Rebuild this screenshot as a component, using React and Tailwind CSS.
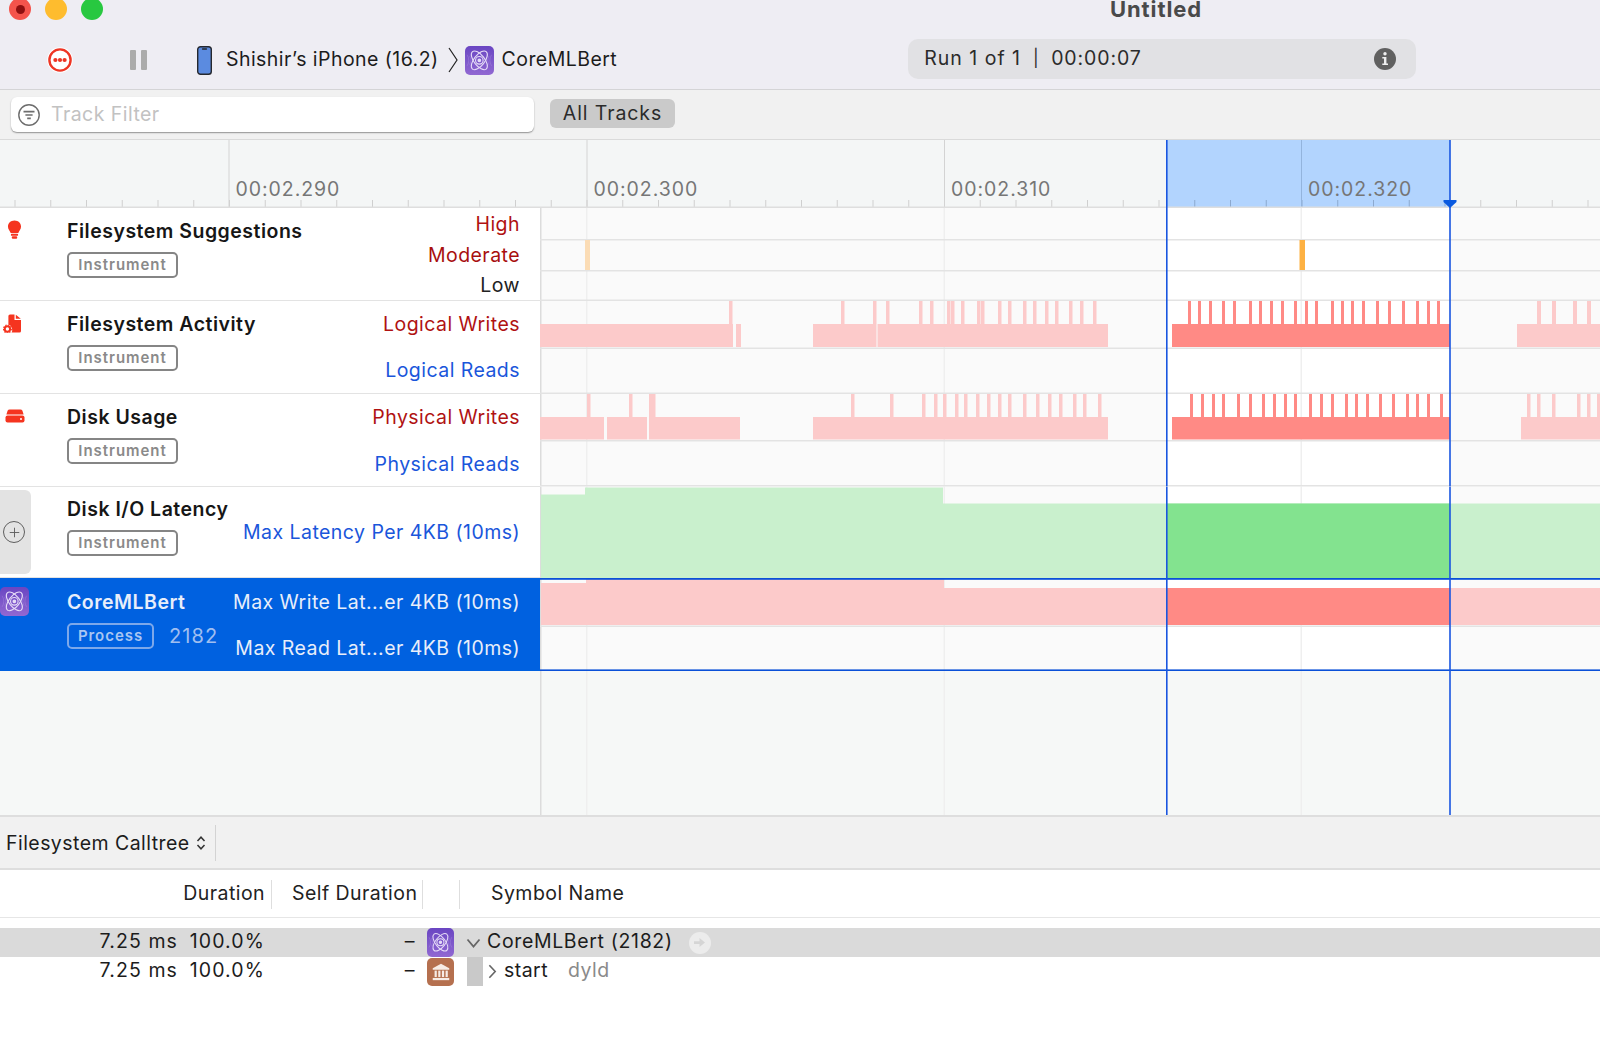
import React from 'react';
import { Plus } from 'lucide-react';

const majors = [228.5, 586.5, 944, 1301];
const labels = ['00:02.290', '00:02.300', '00:02.310', '00:02.320'];
const SEL_L = 1167;
const SEL_R = 1450;

const FADE = '#fccaca';
const HOT = '#ff8a85';

const minorTicks = [];
for (let i = -6; i < 40; i++) minorTicks.push(229 + i * 35.75);

const spikes = {
  activityFaded: [729, 841, 873, 886, 919, 930, 947, 951, 961, 977, 981, 998, 1008, 1023, 1033, 1045, 1055, 1069, 1080, 1093],
  activityHot: [1188, 1198, 1209, 1222, 1233, 1249, 1259, 1270, 1281, 1294, 1305, 1315, 1331, 1341, 1351, 1362, 1376, 1388, 1402, 1416, 1427, 1437],
  activityRight: [1537, 1552, 1573, 1587],
  diskFaded: [587, 629, 649, 652, 851, 890, 922, 934, 943, 955, 964, 976, 987, 998, 1008, 1023, 1036, 1048, 1059, 1073, 1083, 1098],
  diskHot: [1190, 1201, 1212, 1222, 1237, 1249, 1262, 1273, 1284, 1294, 1309, 1320, 1331, 1345, 1355, 1366, 1379, 1392, 1406, 1416, 1427, 1440],
  diskRight: [1527, 1537, 1552, 1577, 1587, 1597],
};

const Rect = ({ x1, x2, y1, y2, fill }) => <rect x={x1} y={y1} width={x2 - x1} height={y2 - y1} fill={fill} />;

// timeline lane drawing, coordinates are page coordinates
const Lane = ({ top, h, bg = '#fafafa', lines = [], selBg = '#ffffff', children, border = '#e3e3e3' }) => (
  <svg width="1060" height={h} viewBox={`540 ${top} 1060 ${h}`} className="block shrink-0">
    <Rect x1={540} x2={1600} y1={top} y2={top + h} fill={bg} />
    <Rect x1={SEL_L} x2={SEL_R} y1={top} y2={top + h} fill={selBg} />
    {majors.slice(1).map((x) => (
      <rect key={x} x={x - 0.5} y={top} width="1.5" height={h} fill="#efefef" />
    ))}
    <rect x="540" y={top} width="1.5" height={h} fill="#dcdcdc" />
    {lines.map((y) => (
      <rect key={y} x="540" y={y} width="1060" height="1.5" fill={border} />
    ))}
    {children}
    <rect x={SEL_L - 1} y={top} width="1.6" height={h} fill="#1a56e0" />
    <rect x={SEL_R - 0.8} y={top} width="1.6" height={h} fill="#1a56e0" />
  </svg>
);

const AtomIcon = ({ className }) => (
  <div className={`flex items-center justify-center bg-linear-to-b from-[#6a45c2] to-[#9168d2] rounded-[5px] ${className}`}>
    <svg viewBox="0 0 24 24" className="w-[92%] h-[92%]" fill="none" stroke="#e6dcf7" strokeWidth="1">
      <g opacity="0.22" strokeWidth="0.7">
        <path d="M1 7 Q4 12 1 17 M3.4 8 Q5.6 12 3.4 16 M23 7 Q20 12 23 17 M20.6 8 Q18.4 12 20.6 16" />
      </g>
      <ellipse cx="12" cy="12" rx="4.8" ry="10" transform="rotate(38 12 12)" />
      <ellipse cx="12" cy="12" rx="4.8" ry="10" transform="rotate(-38 12 12)" />
      <circle cx="12" cy="12" r="3.4" />
      <circle cx="12" cy="12" r="1.2" fill="#e6dcf7" />
    </svg>
  </div>
);

const BankIcon = () => (
  <div className="flex items-center justify-center w-[27px] h-[28px] rounded-[5px] bg-[#b5704f]">
    <svg viewBox="0 0 24 24" className="w-[22px] h-[22px]" fill="#f7ece6">
      <path d="M12 3 L21 8 V9.5 H3 V8 Z" />
      <rect x="5" y="10.5" width="2.4" height="7" />
      <rect x="9" y="10.5" width="2.4" height="7" />
      <rect x="13" y="10.5" width="2.4" height="7" />
      <rect x="17" y="10.5" width="2.4" height="7" />
      <rect x="3" y="18.5" width="18" height="2.4" />
    </svg>
  </div>
);

const BulbIcon = () => (
  <svg viewBox="0 0 16 22" className="w-[15px] h-[20px]">
    <path d="M8 0.5 C3.6 0.5 0.8 3.6 0.8 7.2 C0.8 10.4 3 11.8 3.8 14.4 H12.2 C13 11.8 15.2 10.4 15.2 7.2 C15.2 3.6 12.4 0.5 8 0.5 Z" fill="#f5341f" />
    <rect x="4" y="15.2" width="8" height="2.2" rx="1" fill="#f5341f" />
    <rect x="5" y="18" width="6" height="2.6" rx="1.2" fill="#f5341f" />
  </svg>
);

const FileGearIcon = () => (
  <svg viewBox="0 0 19 19" className="w-[19px] h-[19px]">
    <path d="M7 0.5 H11.5 V6 H18 V17 Q18 18.5 16.5 18.5 H8.6 Q9.6 16.6 9 14.2 Q8 11.4 5.4 10.6 V2 Q5.4 0.5 7 0.5 Z" fill="#f5341f" />
    <path d="M12.8 0.8 L17.8 4.8 H12.8 Z" fill="#f5341f" />
    <circle cx="4.4" cy="15" r="2.7" fill="none" stroke="#f5341f" strokeWidth="2" />
    <circle cx="4.4" cy="15" r="4" fill="none" stroke="#f5341f" strokeWidth="1.1" strokeDasharray="1.4 1.3" />
  </svg>
);

const DiskIcon = () => (
  <svg viewBox="0 0 20 14" className="w-[20px] h-[14px]">
    <path d="M4.6 0.5 H15.4 Q16.8 0.5 17.4 1.8 L18.6 5.4 H1.4 L2.6 1.8 Q3.2 0.5 4.6 0.5 Z" fill="#f5341f" />
    <rect x="0.5" y="6.6" width="19" height="6.9" rx="2" fill="#f5341f" />
    <circle cx="16" cy="10" r="1" fill="#fff" />
  </svg>
);

const PhoneIcon = () => (
  <svg viewBox="0 0 15 29" className="w-[15px] h-[29px]">
    <rect x="0.7" y="0.7" width="13.6" height="27.6" rx="2.8" fill="#5b8be0" stroke="#25282e" strokeWidth="1.4" />
    <rect x="4.9" y="2.2" width="5.2" height="1.5" rx="0.7" fill="#25282e" />
  </svg>
);

const RecordIcon = () => (
  <svg viewBox="0 0 26 26" className="w-[26px] h-[26px]">
    <circle cx="13" cy="13" r="12.8" fill="#fff" />
    <circle cx="13" cy="13" r="10.6" fill="none" stroke="#ee3524" strokeWidth="2.4" />
    <circle cx="8.4" cy="13" r="2.1" fill="#ee3524" />
    <circle cx="13" cy="13" r="2.1" fill="#ee3524" />
    <circle cx="17.6" cy="13" r="2.1" fill="#ee3524" />
  </svg>
);

const InfoIcon = () => (
  <svg viewBox="0 0 22 22" className="w-[22px] h-[22px]">
    <circle cx="11" cy="11" r="11" fill="#606060" />
    <circle cx="11" cy="5.8" r="1.7" fill="#eee" />
    <path d="M8.3 9 H12.4 V15.4 H14 V17 H8.3 V15.4 H10 V10.6 H8.3 Z" fill="#eee" />
  </svg>
);

const FilterIcon = () => (
  <svg viewBox="0 0 22 22" className="w-[22px] h-[22px]" fill="none" stroke="#6d6d6d">
    <circle cx="11" cy="11" r="10.2" strokeWidth="1.4" />
    <path d="M5.5 7.6 H16.5 M7.4 11 H14.6 M9.2 14.4 H12.8" strokeWidth="1.6" />
  </svg>
);

const Badge = ({ children, active }) => (
  <div
    className={`h-[26px] flex items-center justify-center border-[2px] rounded-[5px] text-[15px] font-semibold tracking-[0.95px] ${
      active ? 'w-[87px] border-[#7da8ea] text-[#a9c6f2]' : 'w-[111px] border-[#858585] text-[#8a8a8a] bg-white'
    }`}
  >
    {children}
  </div>
);

const TrackInfo = ({ title, kind = 'Instrument', active, pid, icon, labels, titleTop, badgeGap = 'mt-[9px]' }) => (
  <div className={`relative w-[540px] shrink-0 h-full ${active ? 'bg-[#0061e0]' : 'bg-white border-b-[1.5px] border-[#e3e3e3]'}`}>
    {icon}
    <div className={`pl-[67px] ${titleTop}`}>
      <div className={`text-[19.5px] leading-[24px] font-semibold tracking-[0.5px] ${active ? 'text-[#e8eefa]' : 'text-[#161616]'}`}>{title}</div>
      <div className={`${badgeGap} flex items-center gap-[15px]`}>
        <Badge active={active}>{kind}</Badge>
        {pid && <span className="text-[20px] tracking-[1.1px] text-[#a0bff0]">{pid}</span>}
      </div>
    </div>
    {labels}
  </div>
);

const TrackLabel = ({ color, children }) => <div className={`text-[19.5px] leading-[24px] whitespace-nowrap ${color}`}>{children}</div>;

const LabelColumn = ({ className, children }) => (
  <div className={`absolute top-0 right-[20px] flex flex-col items-end ${className}`}>{children}</div>
);

const IconSlot = ({ className, children }) => <div className={`absolute ${className}`}>{children}</div>;

const App = () => {
  return (
    <div className="w-[1600px] h-[1048px] overflow-hidden flex flex-col bg-white text-[#1c1c1c] tracking-[0.45px] font-['Inter','Liberation_Sans',sans-serif]">
      {/* title bar + toolbar */}
      <div className="h-[90px] shrink-0 bg-[#eeedf3] border-b-[1.5px] border-[#d4d4d6] relative">
        <div className="flex gap-[14px] pl-[9px] -mt-[2px]">
          <div className="w-[22px] h-[22px] rounded-full bg-[#f4544c] flex items-center justify-center">
            <div className="w-[9px] h-[9px] rounded-full bg-[#8e1010]" />
          </div>
          <div className="w-[22px] h-[22px] rounded-full bg-[#febc2e]" />
          <div className="w-[22px] h-[22px] rounded-full bg-[#28c840]" />
        </div>
        <div className="absolute top-[-7px] left-[1110px] text-[22px] font-bold tracking-[0.9px] text-[#4a4a4a]">Untitled</div>
        <div className="flex items-center mt-[20px] h-[40px]">
          <div className="ml-[47px]"><RecordIcon /></div>
          <div className="ml-[57px] flex gap-[5px]">
            <div className="w-[6px] h-[20px] bg-[#ababab] rounded-[1px]" />
            <div className="w-[6px] h-[20px] bg-[#ababab] rounded-[1px]" />
          </div>
          <div className="ml-[50px]"><PhoneIcon /></div>
          <div className="ml-[14px] text-[19.5px] whitespace-nowrap">Shishir’s iPhone (16.2)</div>
          <svg viewBox="0 0 10 26" className="ml-[9px] w-[10px] h-[26px]" fill="none" stroke="#222" strokeWidth="1.2">
            <path d="M1 1 L9 13 L1 25" />
          </svg>
          <AtomIcon className="ml-[7px] w-[29px] h-[29px]" />
          <div className="ml-[8px] text-[19.5px]">CoreMLBert</div>
          <div className="ml-[291px] -mt-[2px] w-[508px] h-[40px] bg-[#e1e1e4] rounded-[10px] flex items-center justify-between pl-[16px] pr-[20px] text-[19.5px] text-[#2b2b2b]">
            <div className="flex items-center">
              <span className="tracking-[1px]">Run 1 of 1</span>
              <span className="mx-[12px] text-[17px]">|</span>
              <span className="tracking-[0.9px]">00:00:07</span>
            </div>
            <InfoIcon />
          </div>
        </div>
      </div>

      {/* filter bar */}
      <div className="h-[50px] shrink-0 bg-[#f1f1f1] border-b-[1.5px] border-[#dadada] flex items-center pl-[11px]">
        <div className="w-[523px] h-[35px] bg-white rounded-[6px] shadow-[0_1px_1.5px_rgba(0,0,0,0.4)] flex items-center pl-[7px] gap-[11px]">
          <FilterIcon />
          <span className="text-[19.5px] text-[#c2c2c2] pt-[1px]">Track Filter</span>
        </div>
        <div className="ml-[16px] w-[125px] h-[29px] bg-[#cacaca] rounded-[6px] flex items-center justify-center text-[19.5px] tracking-[0.9px] text-[#2b2b2b] -mt-[2px]">All Tracks</div>
      </div>

      {/* ruler */}
      <svg width="1600" height="68" viewBox="0 140 1600 68" className="block shrink-0 font-['Inter',sans-serif]">
        <rect x="0" y="140" width="1600" height="68" fill="#f4f6f6" />
        <rect x={SEL_L} y="140" width={SEL_R - SEL_L} height="68" fill="#b2d4fe" />
        {minorTicks.map((x) => {
          const inSel = x > SEL_L && x < SEL_R;
          return <rect key={x} x={x} y="200" width="1" height="7" fill={inSel ? '#8ca9cf' : '#cfcfcf'} />;
        })}
        {majors.map((x, i) => (
          <React.Fragment key={x}>
            <rect x={x} y="140" width="1" height="67" fill={i === 3 ? '#93b4dd' : '#d3d3d3'} />
            <text x={x + 7} y="196" fontSize="19.5" letterSpacing="0.95" fill="#767676">{labels[i]}</text>
          </React.Fragment>
        ))}
        <rect x="0" y="206.5" width="1600" height="1.5" fill="#dedede" />
        <rect x={SEL_L - 1} y="140" width="1.6" height="68" fill="#1a56e0" />
        <rect x={SEL_R - 0.8} y="140" width="1.6" height="68" fill="#1a56e0" />
        <path d="M1443.5 200 H1456.5 V202 L1450 208 L1443.5 202 Z" fill="#0a5ae0" />
      </svg>

      {/* tracks */}
      <div className="flex shrink-0 h-[93px]">
        <TrackInfo
          title="Filesystem Suggestions"
          titleTop="pt-[11px]"
          icon={<IconSlot className="left-[7px] top-[12px]"><BulbIcon /></IconSlot>}
          labels={
            <LabelColumn className="pt-[4px] gap-[6.5px]">
              <TrackLabel color="text-[#b01212]">High</TrackLabel>
              <TrackLabel color="text-[#a80f0f]">Moderate</TrackLabel>
              <TrackLabel color="text-[#222222]">Low</TrackLabel>
            </LabelColumn>
          }
        />
        <Lane top={208} h={93} lines={[239, 270, 299.5]}>
          <Rect x1={585} x2={590} y1={240} y2={270} fill="#fbdcb5" />
          <Rect x1={1299.5} x2={1305} y1={240} y2={270} fill="#fdb143" />
        </Lane>
      </div>
      <div className="flex shrink-0 h-[93px]">
        <TrackInfo
          title="Filesystem Activity"
          titleTop="pt-[11px]"
          icon={<IconSlot className="left-[3px] top-[13px]"><FileGearIcon /></IconSlot>}
          labels={
            <LabelColumn className="pt-[11px] gap-[22px]">
              <TrackLabel color="text-[#b01212]">Logical Writes</TrackLabel>
              <TrackLabel color="text-[#1a56db]">Logical Reads</TrackLabel>
            </LabelColumn>
          }
        />
        <Lane top={301} h={93} lines={[347.5, 392.5]}>
          <Rect x1={540} x2={733} y1={324} y2={347} fill={FADE} />
          <Rect x1={736} x2={741} y1={324} y2={347} fill={FADE} />
          <Rect x1={813} x2={876.5} y1={324} y2={347} fill={FADE} />
          <Rect x1={877.5} x2={1108} y1={324} y2={347} fill={FADE} />
          <Rect x1={SEL_L + 5} x2={SEL_R} y1={324} y2={347} fill={HOT} />
          <Rect x1={1517} x2={1600} y1={324} y2={347} fill={FADE} />
          {spikes.activityFaded.map((x) => <Rect key={x} x1={x} x2={x + 3.5} y1={301} y2={324} fill={FADE} />)}
          {spikes.activityHot.map((x) => <Rect key={x} x1={x} x2={x + 3} y1={301} y2={324} fill={HOT} />)}
          {spikes.activityRight.map((x) => <Rect key={x} x1={x} x2={x + 4} y1={301} y2={324} fill={FADE} />)}
        </Lane>
      </div>
      <div className="flex shrink-0 h-[92.5px]">
        <TrackInfo
          title="Disk Usage"
          titleTop="pt-[11px]"
          icon={<IconSlot className="left-[5px] top-[15px]"><DiskIcon /></IconSlot>}
          labels={
            <LabelColumn className="pt-[11px] gap-[23px]">
              <TrackLabel color="text-[#b01212]">Physical Writes</TrackLabel>
              <TrackLabel color="text-[#1a56db]">Physical Reads</TrackLabel>
            </LabelColumn>
          }
        />
        <Lane top={394} h={92.5} lines={[440, 485]}>
          <Rect x1={540} x2={604} y1={417} y2={439.5} fill={FADE} />
          <Rect x1={607} x2={647} y1={417} y2={439.5} fill={FADE} />
          <Rect x1={649} x2={740} y1={417} y2={439.5} fill={FADE} />
          <Rect x1={813} x2={1108} y1={417} y2={439.5} fill={FADE} />
          <Rect x1={SEL_L + 5} x2={SEL_R} y1={417} y2={439.5} fill={HOT} />
          <Rect x1={1521} x2={1600} y1={417} y2={439.5} fill={FADE} />
          {spikes.diskFaded.map((x) => <Rect key={x} x1={x} x2={x + 3.5} y1={394} y2={417} fill={FADE} />)}
          {spikes.diskHot.map((x) => <Rect key={x} x1={x} x2={x + 3} y1={394} y2={417} fill={HOT} />)}
          {spikes.diskRight.map((x) => <Rect key={x} x1={x} x2={x + 3.5} y1={394} y2={417} fill={FADE} />)}
        </Lane>
      </div>
      <div className="flex shrink-0 h-[91.5px]">
        <TrackInfo
          title="Disk I/O Latency"
          titleTop="pt-[10.5px]"
          icon={
            <IconSlot className="left-0 top-[3.5px] w-[31px] h-[84px] bg-[#e3e3e3] rounded-r-[6px] flex items-center justify-center pr-[3px]">
              <div className="w-[22px] h-[22px] rounded-full border-[1.5px] border-[#5f5f5f] flex items-center justify-center">
                <Plus size={15} strokeWidth={1.5} className="text-[#5f5f5f]" />
              </div>
            </IconSlot>
          }
          labels={
            <LabelColumn className="pt-[33.5px]">
              <TrackLabel color="text-[#1a56db]">Max Latency Per 4KB (10ms)</TrackLabel>
            </LabelColumn>
          }
        />
        <Lane top={486.5} h={91.5} lines={[]}>
          <Rect x1={541} x2={585} y1={494} y2={578} fill="#c9f0cd" />
          <Rect x1={585} x2={943} y1={487} y2={578} fill="#c9f0cd" />
          <Rect x1={943} x2={1600} y1={503} y2={578} fill="#c9f0cd" />
          <Rect x1={SEL_L} x2={SEL_R} y1={503} y2={578} fill="#83e38f" />
        </Lane>
      </div>
      <div className="flex shrink-0 h-[93px]">
        <TrackInfo
          title="CoreMLBert"
          kind="Process"
          pid="2182"
          active
          titleTop="pt-[12px]"
          badgeGap="mt-[7px]"
          icon={<IconSlot className="left-0 top-[9px]"><AtomIcon className="w-[29px] h-[29px]" /></IconSlot>}
          labels={
            <LabelColumn className="pt-[12px] gap-[22px]">
              <TrackLabel color="text-[#e8eefa]">Max Write Lat...er 4KB (10ms)</TrackLabel>
              <TrackLabel color="text-[#e8eefa]">Max Read Lat...er 4KB (10ms)</TrackLabel>
            </LabelColumn>
          }
        />
        <Lane top={578} h={93} lines={[625.5]}>
          <Rect x1={541} x2={586} y1={583} y2={625} fill={FADE} />
          <Rect x1={586} x2={944} y1={579} y2={625} fill={FADE} />
          <Rect x1={944} x2={1600} y1={588} y2={625} fill={FADE} />
          <Rect x1={SEL_L} x2={SEL_R} y1={579} y2={588} fill="#ffffff" />
          <Rect x1={SEL_L} x2={SEL_R} y1={588} y2={625} fill={HOT} />
          <rect x="540" y="578" width="1060" height="1.8" fill="#0a50d8" />
          <rect x="540" y="669.4" width="1060" height="1.8" fill="#0a50d8" />
        </Lane>
      </div>

      {/* empty track area */}
      <div className="flex h-[144px] shrink-0 bg-[#f6f8f7]">
        <div className="w-[540px] shrink-0" />
        <Lane top={671} h={144} bg="#f6f8f7" selBg="#f6f8f7" />
      </div>

      {/* detail pane */}
      <div className="h-[55px] shrink-0 bg-[#f1f1f1] border-y-[2px] border-[#dedede] flex items-center pl-[6px]">
        <span className="text-[19.5px] w-[190px] whitespace-nowrap pt-[2px]">Filesystem Calltree</span>
        <svg viewBox="0 0 10 16" className="w-[10px] h-[16px]" fill="none" stroke="#333" strokeWidth="1.5">
          <path d="M1.5 6 L5 2.2 L8.5 6 M1.5 10 L5 13.8 L8.5 10" />
        </svg>
        <div className="ml-[9px] w-px h-[36px] bg-[#d3d3d3]" />
      </div>

      <div className="h-[48px] shrink-0 border-b-[1.5px] border-[#e6e6e6] flex items-center text-[19.5px] text-[#222222] pt-[1px]">
        <div className="w-[265px] text-right">Duration</div>
        <div className="ml-[6px] w-px h-[29px] bg-[#dedede]" />
        <div className="w-[144px] pl-[20px] whitespace-nowrap">Self Duration</div>
        <div className="ml-[6px] w-px h-[29px] bg-[#dedede]" />
        <div className="ml-[36px] w-px h-[29px] bg-[#dedede]" />
        <div className="ml-[31px]">Symbol Name</div>
      </div>

      <div className="h-[10px] shrink-0" />
      <div className="h-[29px] shrink-0 bg-[#dadada] flex items-center text-[19.5px] text-[#1c1c1c]">
        <div className="w-[178px] text-right whitespace-nowrap tracking-[1.1px] -mt-[2px]">7.25 ms</div>
        <div className="w-[87px] text-right tracking-[1.1px] -mt-[2px]">100.0%</div>
        <div className="w-[150px] text-right -mt-[2px]">–</div>
        <AtomIcon className="ml-[12px] w-[27px] h-[29px]" />
        <svg viewBox="0 0 14 10" className="ml-[12px] w-[15px] h-[10px]" fill="none" stroke="#666" strokeWidth="1.8">
          <path d="M1 1.5 L7 8.5 L13 1.5" />
        </svg>
        <div className="ml-[6px] whitespace-nowrap tracking-[0.65px] -mt-[2px]">CoreMLBert (2182)</div>
        <div className="ml-[16px] w-[22px] h-[22px] rounded-full bg-[#ececec] flex items-center justify-center">
          <svg viewBox="0 0 14 12" className="w-[13px] h-[11px]" fill="#d5d5d5">
            <path d="M1 4.5 H7 V1 L13 6 L7 11 V7.5 H1 Z" />
          </svg>
        </div>
      </div>
      <div className="h-[29px] shrink-0 flex items-center text-[19.5px] text-[#1c1c1c]">
        <div className="w-[178px] text-right whitespace-nowrap tracking-[1.1px] -mt-[2px]">7.25 ms</div>
        <div className="w-[87px] text-right tracking-[1.1px] -mt-[2px]">100.0%</div>
        <div className="w-[150px] text-right -mt-[2px]">–</div>
        <div className="ml-[12px]"><BankIcon /></div>
        <div className="ml-[13px] w-[16px] h-[29px] bg-[#c9c9c9]" />
        <svg viewBox="0 0 10 16" className="ml-[5px] w-[9px] h-[15px]" fill="none" stroke="#666" strokeWidth="1.8">
          <path d="M1.5 1 L8 8 L1.5 15" />
        </svg>
        <div className="ml-[7px] -mt-[2px]">start</div>
        <div className="ml-[20px] text-[#8a8a8a] -mt-[2px]">dyld</div>
      </div>
    </div>
  );
};

export default App;
